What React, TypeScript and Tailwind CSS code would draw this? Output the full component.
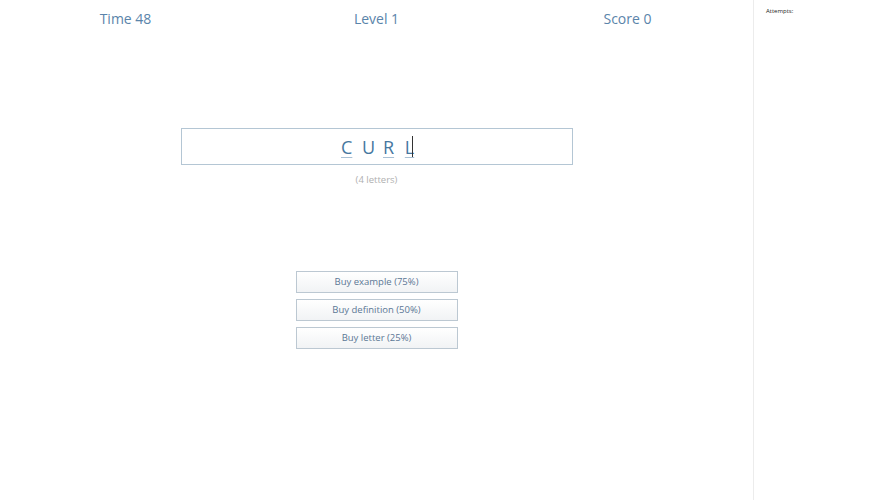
const letters = [
  { ch: "C", hint: true },
  { ch: "U", hint: false },
  { ch: "R", hint: true },
  { ch: "L", hint: true },
];

const buys = ["Buy example (75%)", "Buy definition (50%)", "Buy letter (25%)"];

export default function App() {
  return (
    <div className="flex h-[500px] w-[888px] bg-white font-['Open_Sans',sans-serif]">
      <div className="flex w-[753px] flex-col">
        <div className="grid grid-cols-3 pt-[8px] text-[14px] leading-[22px] text-[#5a84aa]">
          <div className="text-center">Time 48</div>
          <div className="text-center">Level 1</div>
          <div className="text-center">Score 0</div>
        </div>
        <div className="mt-[98px] flex justify-center">
          <div className="flex h-[37px] w-[392px] items-center justify-center border border-[#b4c6d4] bg-white">
            <div className="flex items-end pr-[4px] text-[18px] leading-[22px] text-[#46779f]">
              {letters.map((l, i) => (
                <span
                  key={i}
                  className={`mx-[5px] w-[11px] text-center ${l.hint ? "underline decoration-[#a9c0d4] decoration-1 underline-offset-[3px]" : ""}`}
                >
                  {l.ch}
                </span>
              ))}
              <span className="-ml-[8px] mb-[1px] h-[21px] w-px bg-[#333]" />
            </div>
          </div>
        </div>
        <div className="mt-[8px] text-center text-[9.5px] leading-[14px] text-[#b0b0b0]">(4 letters)</div>
        <div className="mt-[84px] flex flex-col items-center gap-[6px]">
          {buys.map((b) => (
            <button
              key={b}
              className="h-[22px] w-[162px] border border-[#bcc8d2] bg-gradient-to-b from-white to-[#f1f3f5] text-[9.5px] text-[#5b7795]"
            >
              {b}
            </button>
          ))}
        </div>
      </div>
      <div className="flex-1 border-l border-[#ececec] pl-[12px] pt-[7px]">
        <div className="text-[6px] leading-[8px] text-[#222]">Attempts:</div>
      </div>
    </div>
  );
}
